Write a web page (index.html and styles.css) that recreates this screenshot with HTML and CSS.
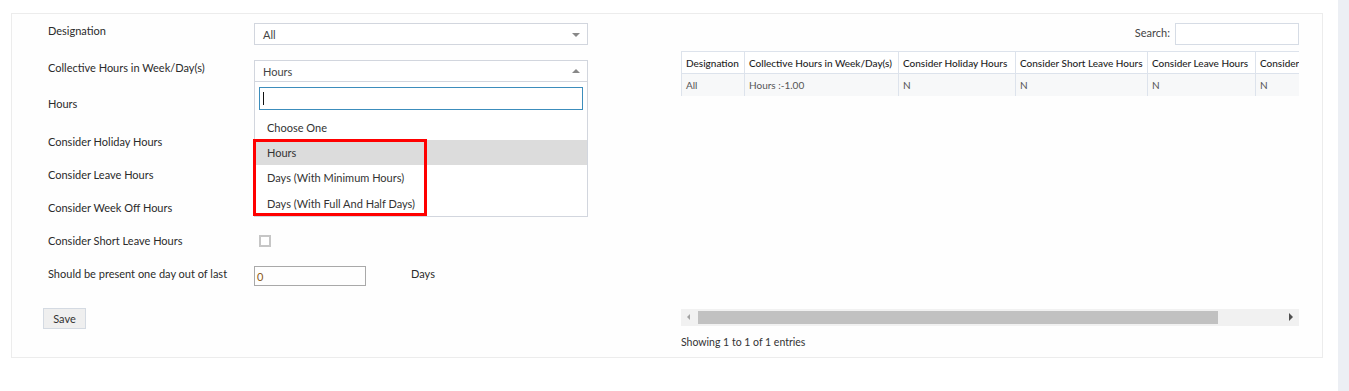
FILE: index.html
```html
<!DOCTYPE html>
<html>
<head>
<meta charset="utf-8">
<link rel="stylesheet" href="styles.css">
</head>
<body>
<div class="page">
  <div class="main">
    <div class="panel">
      <div class="form">
        <div class="row r1">
          <div class="label">Designation</div>
          <div class="select"><span>All</span><i class="arrow down"></i></div>
        </div>
        <div class="row r2">
          <div class="label">Collective Hours in Week/Day(s)</div>
          <div class="select open"><span>Hours</span><i class="arrow up"></i>
            <div class="dropdown">
              <div class="dd-search"><span class="caret"></span></div>
              <div class="opt">Choose One</div>
              <div class="opt hl">Hours</div>
              <div class="opt">Days (With Minimum Hours)</div>
              <div class="opt last">Days (With Full And Half Days)</div>
              <div class="mark"></div>
            </div>
          </div>
        </div>
        <div class="row r3">
          <div class="label">Hours</div>
          <div class="text-input"></div>
        </div>
        <div class="row r4">
          <div class="label">Consider Holiday Hours</div>
          <div class="check"></div>
        </div>
        <div class="row r4">
          <div class="label">Consider Leave Hours</div>
          <div class="check"></div>
        </div>
        <div class="row r4">
          <div class="label">Consider Week Off Hours</div>
          <div class="check"></div>
        </div>
        <div class="row r4">
          <div class="label">Consider Short Leave Hours</div>
          <div class="check"></div>
        </div>
        <div class="row r8">
          <div class="label">Should be present one day out of last</div>
          <div class="num-input">0</div>
          <div class="days">Days</div>
        </div>
        <div class="btn-row"><button class="btn">Save</button></div>
      </div>
      <div class="list">
        <div class="search-row"><span class="search-label">Search:</span><div class="search-box"></div></div>
        <div class="table-wrap">
          <table>
            <thead>
              <tr>
                <th class="c1">Designation</th>
                <th class="c2">Collective Hours in Week/Day(s)</th>
                <th class="c3">Consider Holiday Hours</th>
                <th class="c4">Consider Short Leave Hours</th>
                <th class="c5">Consider Leave Hours</th>
                <th class="c6">Consider Week Off Hours</th>
              </tr>
            </thead>
            <tbody>
              <tr>
                <td>All</td>
                <td>Hours :-1.00</td>
                <td>N</td>
                <td>N</td>
                <td>N</td>
                <td>N</td>
              </tr>
            </tbody>
          </table>
        </div>
        <div class="hscroll">
          <i class="sarrow left"></i>
          <div class="thumb"></div>
          <i class="sarrow right"></i>
        </div>
        <div class="info">Showing 1 to 1 of 1 entries</div>
      </div>
    </div>
  </div>
  <div class="vstrip"></div>
</div>
</body>
</html>
```

FILE: styles.css
```css
* { box-sizing: border-box; }
html, body { margin: 0; padding: 0; background: #fff; }
body {
  font-family: Lato, "Open Sans", Arial, sans-serif;
  font-size: 11px;
  color: #2b2b2b;
  width: 1349px;
  height: 391px;
  overflow: hidden;
}
.page { display: flex; height: 391px; }
.main { flex: 1; padding: 13px 0 0 11px; }
.vstrip { width: 12px; margin-left: 15px; background: #eceff4; }
.panel {
  width: 1312px;
  border: 1px solid #ececec;
  background: #fefefe;
  padding: 9px 23px 7px 31px;
  display: grid;
  grid-template-columns: 627px 618px;
  column-gap: 11px;
}
.form { display: flex; flex-direction: column; }
.row { display: flex; align-items: flex-start; }
.r1 { height: 37px; }
.r2 { height: 36px; }
.r3 { height: 38px; }
.r4 { height: 33px; }
.r8 { height: 42px; }
.label {
  width: 211px;
  padding-left: 5px;
  line-height: 16px;
  white-space: nowrap;
}
.select {
  position: relative;
  width: 334px;
  height: 22px;
  border: 1px solid #d2d6de;
  background: #fff;
  padding-left: 8px;
  line-height: 21px;
  color: #444;
}
.arrow {
  position: absolute;
  right: 7px;
  top: 9px;
  width: 0; height: 0;
  border-left: 4px solid transparent;
  border-right: 4px solid transparent;
}
.arrow.down { border-top: 4px solid #888; }
.arrow.up { border-bottom: 4px solid #888; top: 8px; }
.dropdown {
  position: absolute;
  left: -1px;
  top: 21px;
  width: 334px;
  height: 135px;
  border: 1px solid #d2d6de;
  border-top: none;
  background: #fff;
  padding: 5px 4px 0 4px;
  z-index: 5;
}
.dd-search {
  height: 23px;
  border: 1px solid #3c8dbc;
  position: relative;
  margin-bottom: 5px;
}
.caret {
  position: absolute;
  left: 3px; top: 4px;
  width: 1px; height: 13px;
  background: #111;
}
.opt {
  height: 25px;
  line-height: 26px;
  margin: 0 -4px;
  padding-left: 12px;
  color: #333;
}
.opt.last { line-height: 28px; }
.opt.hl { background: #dcdcdc; }
.mark {
  position: absolute;
  left: -2px;
  top: 57px;
  width: 174px;
  height: 77px;
  border: 3px solid #ff0000;
}
.text-input {
  width: 334px;
  height: 22px;
  border: 1px solid #d2d6de;
  margin-top: -3px;
}
.check {
  width: 12px; height: 12px;
  border: 2px solid #c6c6c6;
  margin: 2px 0 0 5px;
  background: #fff;
}
.num-input {
  width: 112px;
  height: 20px;
  border: 1px solid #a9a9a9;
  padding-left: 2px;
  line-height: 19px;
  color: #8a5a14;
}
.days { margin-left: 45px; line-height: 16px; }
.btn-row { display: flex; }
.btn {
  font-family: inherit;
  font-size: 11px;
  color: #333;
  width: 43px;
  height: 21px;
  padding: 0;
  background: #efefef;
  border: 1px solid #d4dae2;
}
.list { display: flex; flex-direction: column; }
.search-row {
  height: 22px;
  display: flex;
  justify-content: flex-end;
  align-items: flex-start;
  gap: 5px;
  color: #444;
}
.search-label { line-height: 20px; }
.search-box { width: 124px; height: 22px; border: 1px solid #d6dce5; background: #fff; }
.table-wrap {
  margin-top: 6px;
  height: 258px;
  overflow: hidden;
}
table {
  border-collapse: collapse;
  font-size: 10px;
  white-space: nowrap;
}
th, td {
  border: 1px solid #dde3ec;
  height: 22px;
  padding: 0 4px;
  text-align: left;
}
th { font-weight: 500; color: #1e1e1e; background: #fff; }
td { background: #f7f8f9; color: #555; border-bottom: none; }
.c1 { min-width: 63px; }
.c2 { min-width: 154px; }
.c3 { min-width: 117px; }
.c4 { min-width: 132px; }
.c5 { min-width: 108px; }
.hscroll {
  position: relative;
  height: 17px;
  background: #f1f1f1;
}
.thumb {
  position: absolute;
  left: 17px;
  width: 520px;
  top: 2px;
  height: 13px;
  background: #c1c1c1;
}
.sarrow {
  position: absolute;
  top: 5px;
  width: 0; height: 0;
  border-top: 3px solid transparent;
  border-bottom: 3px solid transparent;
}
.sarrow.left { left: 6px; border-right: 3px solid #a3a3a3; }
.sarrow.right { right: 6px; border-left: 4px solid #505050; top: 4px; border-top-width: 4px; border-bottom-width: 4px; }
.info { margin-top: 8px; line-height: 16px; color: #333; font-size: 10.5px; }
```
